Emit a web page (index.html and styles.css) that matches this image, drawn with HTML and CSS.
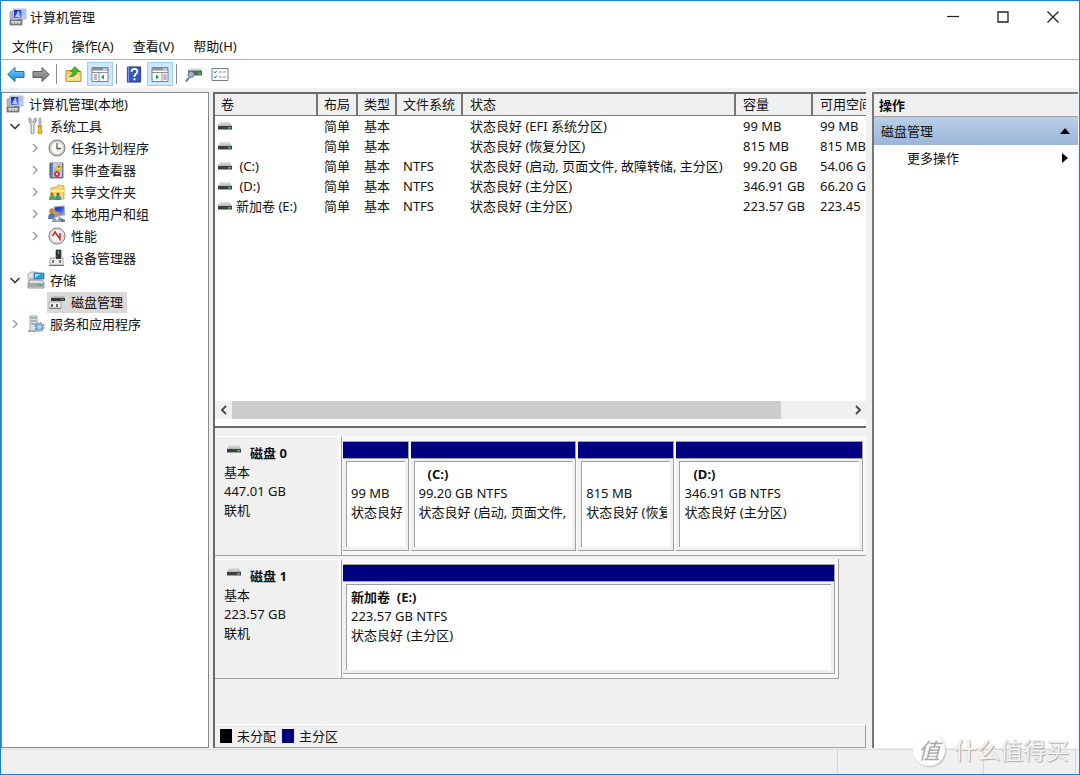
FILE: index.html
```html
<!DOCTYPE html>
<html lang="zh-CN">
<head>
<meta charset="utf-8">
<title>计算机管理</title>
<link rel="stylesheet" href="styles.css">
</head>
<body>
<svg class="defs" aria-hidden="true">
  <defs>
    <linearGradient id="blueArrow" x1="0" y1="0" x2="0" y2="1"><stop offset="0" stop-color="#7fd6fb"/><stop offset="1" stop-color="#0f86cf"/></linearGradient>
    <linearGradient id="greyArrow" x1="0" y1="0" x2="0" y2="1"><stop offset="0" stop-color="#b4b4b4"/><stop offset="1" stop-color="#6d6d6d"/></linearGradient>
    <linearGradient id="driveTop" x1="0" y1="0" x2="0" y2="1"><stop offset="0" stop-color="#e4e4e6"/><stop offset="1" stop-color="#b4b4b8"/></linearGradient>
    <linearGradient id="screen" x1="0" y1="0" x2="1" y2="1"><stop offset="0" stop-color="#1228b8"/><stop offset=".5" stop-color="#3158e0"/><stop offset="1" stop-color="#b5c9f5"/></linearGradient>
  </defs>
  <symbol id="computer" viewBox="0 0 18 18">
    <path d="M1 4l3-1v8H1z" fill="#b9bcc2" stroke="#85888f" stroke-width=".6"/>
    <path d="M4 1h13v10H4z" fill="#d3d8e4" stroke="#9aa0ad" stroke-width=".7"/>
    <path d="M5 2h11v8H5z" fill="url(#screen)"/>
    <path d="M12 2h4v8h-3z" fill="#c6d3f2" opacity=".8"/>
    <path d="M9 3l1 0 1 6H6z" fill="#eef3ff" opacity=".7"/>
    <path d="M8 11h5l1 2H7z" fill="#8c9098"/>
    <path d="M1 12h12v5H1z" fill="#8b8f95" stroke="#565a60" stroke-width=".7"/>
    <path d="M2 14h10M4 13v3M7 13v3M10 13v3" stroke="#eceef0" stroke-width=".9"/>
  </symbol>
  <symbol id="tools" viewBox="0 0 18 18">
    <path d="M2 1v4l2 2v9q1 2 3 0V7l2-2V1L7 2v3H4V2z" fill="#eceef0" stroke="#777b80" stroke-width=".9"/>
    <path d="M12 1h2v8h-2z" fill="#c7c9cc" stroke="#85878b" stroke-width=".6"/>
    <path d="M11 9h4l-1 3 1 2v2q-2 2-4 0v-2l1-2z" fill="#f8b913" stroke="#bd7c08" stroke-width=".7"/>
  </symbol>
  <symbol id="clock" viewBox="0 0 18 18">
    <circle cx="9" cy="9" r="8" fill="#d8d8d8" stroke="#777" stroke-width="1"/>
    <circle cx="9" cy="9" r="6.2" fill="#fffdf2" stroke="#a7a7a7" stroke-width=".6"/>
    <path d="M9 9h4a4 4 0 0 1-4 4z" fill="#f2dfa2"/>
    <path d="M9 4v5.500h4" fill="none" stroke="#4e5d75" stroke-width="1.300"/>
  </symbol>
  <symbol id="events" viewBox="0 0 18 18">
    <path d="M2 2h13v15H2z" fill="#6d89b8" stroke="#45597c" stroke-width=".8"/>
    <path d="M5 2h9v14H5z" fill="#b9cbe8"/>
    <path d="M1 4h3M1 7h3M1 10h3M1 13h3" stroke="#54627a" stroke-width="1"/>
    <path d="M11 3l4 6H7z" fill="#ffd93b" stroke="#b48a08" stroke-width=".6"/>
    <path d="M11 5v2" stroke="#333" stroke-width="1"/>
    <circle cx="9" cy="13" r="3" fill="#e23228"/><path d="M8 12l2 2m0-2l-2 2" stroke="#fff" stroke-width=".9"/>
  </symbol>
  <symbol id="shared" viewBox="0 0 18 18">
    <path d="M3 5l6-1 1-2 6 1v13H3z" fill="#f7d56d" stroke="#c59b30" stroke-width=".8"/>
    <path d="M3 7h13v2H3z" fill="#fdeaa6"/>
    <circle cx="4" cy="11" r="1.600" fill="#a56a3c"/><path d="M1 17q0-5 3-5t4 5z" fill="#5aa65a"/>
    <circle cx="10" cy="11" r="1.600" fill="#8d5730"/><path d="M7 17q0-5 3-5t3 5z" fill="#3c8f9b"/>
  </symbol>
  <symbol id="users" viewBox="0 0 18 18">
    <path d="M6 2l10-1 1 9-9 1z" fill="url(#screen)" stroke="#a3abc0" stroke-width="1"/>
    <circle cx="4" cy="6" r="2.800" fill="#b98a52"/><path d="M0 14q0-6 4-6t5 6z" fill="#5279ad"/>
    <circle cx="9" cy="9" r="2.800" fill="#c4935f"/><path d="M4 17q0-6 5-6t6 6z" fill="#8f9fb0"/>
    <path d="M7 12l2 4 2-4z" fill="#fff"/>
    <path d="M13 13l4 2v2h-4z" fill="#6e757f"/>
  </symbol>
  <symbol id="perf" viewBox="0 0 18 18">
    <circle cx="9" cy="9" r="8" fill="#f6f6f6" stroke="#777" stroke-width="1"/>
    <circle cx="9" cy="9" r="6.300" fill="#fff" stroke="#b0b0b0" stroke-width=".7"/>
    <path d="M4.500 9L7 5l5 7V6" fill="none" stroke="#d8231b" stroke-width="1.600"/>
  </symbol>
  <symbol id="device" viewBox="0 0 18 18">
    <path d="M8 1h5v9H8z" fill="#353a38" stroke="#202321" stroke-width=".6"/>
    <path d="M10 2h1v3h-1z" fill="#5fae78"/>
    <path d="M2 9h13v7H2z" fill="#eeeeee" stroke="#8e8e8e" stroke-width=".8"/>
    <path d="M8 6h5v4H8z" fill="#373b39"/><path d="M5 11v3M12 11v3" stroke="#333" stroke-width="1.300"/>
    <path d="M1 16h15v1H1z" fill="#6e6e6e"/>
  </symbol>
  <symbol id="storage" viewBox="0 0 18 18">
    <path d="M1 3l3-2h6l2 2v5H1z" fill="#dfe2e5" stroke="#8d9298" stroke-width=".7"/>
    <path d="M7 2h10v6H7z" fill="#2e9fd5" stroke="#1f6d98" stroke-width=".7"/><path d="M8 3h5L8 7z" fill="#a4e0fa"/>
    <path d="M1 8l3-2v5H1z" fill="#bfc3c7"/>
    <path d="M1 12l2-3h12l2 3v5H1z" fill="#e2e4e7" stroke="#787d82" stroke-width=".8"/>
    <path d="M1 12h16v4H1z" fill="#a3a7ac"/><path d="M12 13h3v2h-3z" fill="#3fc43f"/>
  </symbol>
  <symbol id="diskmgmt" viewBox="0 0 18 18">
    <path d="M5 3h11l1 2H3z" fill="#b6baba"/><path d="M3 5h14v3H3z" fill="#343937"/><path d="M13 6h3v1h-3z" fill="#46ad53"/>
    <path d="M1 9h12v6H1z" fill="#f0f0f0" stroke="#999" stroke-width=".8"/>
    <path d="M4 11v3M9 11v3" stroke="#2b2b2b" stroke-width="1.400"/><path d="M1 15h12v1H1z" fill="#808080"/>
  </symbol>
  <symbol id="services" viewBox="0 0 18 18">
    <path d="M3 1h7v15H3z" fill="#d9e3e9" stroke="#8499a6" stroke-width=".8"/>
    <path d="M4 3h5M4 6h5M4 9h5" stroke="#64808f" stroke-width="1.200"/>
    <path d="M1 15h8v2H1z" fill="#9fb0ba"/>
    <circle cx="12.500" cy="12" r="3" fill="#b7d3e9" stroke="#6c9dc2" stroke-width="1.500"/>
    <circle cx="12.500" cy="12" r="4.500" fill="none" stroke="#6c9dc2" stroke-width="1.200" stroke-dasharray="2 1.500"/>
  </symbol>
  <symbol id="drive" viewBox="0 0 14 8">
    <path d="M2 0h10l2 4H0z" fill="url(#driveTop)"/><path d="M0 4h14v3H0z" fill="#3c3e40"/><path d="M0 7h14v1H0z" fill="#9da0a2"/><path d="M10 5h3v1.500h-3z" fill="#39cf45"/>
  </symbol>
  <symbol id="open" viewBox="0 0 12 12"><path d="M1.500 4L6 8.500 10.500 4" fill="none" stroke="#404040" stroke-width="1.700"/></symbol>
  <symbol id="closed" viewBox="0 0 12 12"><path d="M4 2l4 4-4 4" fill="none" stroke="#a0a0a0" stroke-width="1.500"/></symbol>
</svg>

<div class="window">
  <header class="titlebar">
    <svg class="ico"><use href="#computer"/></svg>
    <h1 class="title">计算机管理</h1>
    <div class="captions">
      <button class="caption" aria-label="最小化"><svg class="glyph" viewBox="0 0 12 12"><path d="M0 5.500h12" stroke="#222" stroke-width="1.200"/></svg></button>
      <button class="caption" aria-label="最大化"><svg class="glyph" viewBox="0 0 12 12"><path d="M1 1h10v10H1z" fill="none" stroke="#222" stroke-width="1.300"/></svg></button>
      <button class="caption" aria-label="关闭"><svg class="glyph" viewBox="0 0 12 12"><path d="M.5.500l11 11m0-11l-11 11" stroke="#222" stroke-width="1.300"/></svg></button>
    </div>
  </header>

  <nav class="menubar">
    <button class="menu">文件(F)</button>
    <button class="menu">操作(A)</button>
    <button class="menu">查看(V)</button>
    <button class="menu">帮助(H)</button>
  </nav>

  <div class="toolbar">
    <button class="tool" aria-label="后退"><svg class="tico" viewBox="0 0 18 16"><path d="M.7 8L8 1v4h9v6H8v4z" fill="url(#blueArrow)" stroke="#1873ae"/></svg></button>
    <button class="tool" aria-label="前进"><svg class="tico" viewBox="0 0 18 16"><path d="M17.300 8L10 1v4H1v6h9v4z" fill="url(#greyArrow)" stroke="#5e5e5e"/></svg></button>
    <span class="sep"></span>
    <button class="tool wide" aria-label="上一级"><svg class="tico" viewBox="0 0 18 16"><path d="M1 4h5l1 1h9v10H1z" fill="#f0cb6a" stroke="#b89443"/><path d="M2 8h13v6H2z" fill="#fbe094"/><path d="M4 10q4-1 4-5H5l5-5 5 5h-3q-1 6-8 5z" fill="#43b92b" stroke="#298517" stroke-width=".6"/></svg></button>
    <button class="tool wide on" aria-label="显示/隐藏控制台树" aria-pressed="true"><svg class="tico" viewBox="0 0 18 16"><path d="M1 1h16v14H1z" fill="#fafafa" stroke="#7b8087"/><path d="M1 1h16v3H1z" fill="#8b9097"/><path d="M12 2.500h4" stroke="#fff"/><path d="M1 6h16M8 6v9" stroke="#8b9097"/><path d="M3 8.500h3M3 10.500h3M3 12.500h3" stroke="#6b7179"/><path d="M13 8v5l-3-2.500z" fill="#27a32a"/></svg></button>
    <span class="sep"></span>
    <button class="tool wide" aria-label="帮助"><svg class="tico" viewBox="0 0 18 18"><path d="M2 1h14v16H2z" fill="#3358c4" stroke="#23348b"/><path d="M3 1v16" stroke="#92a9ea"/><path d="M6.500 6q0-3 3-3t3 3q0 1.500-2 2.800-1 .8-1 2.700M9.500 13v2" fill="none" stroke="#fff" stroke-width="2"/></svg></button>
    <button class="tool wide on" aria-label="显示/隐藏操作窗格" aria-pressed="true"><svg class="tico" viewBox="0 0 18 16"><path d="M1 1h16v14H1z" fill="#fafafa" stroke="#7b8087"/><path d="M1 1h16v3H1z" fill="#8b9097"/><path d="M12 2.500h4" stroke="#fff"/><path d="M1 6h16M11 6v9" stroke="#8b9097"/><path d="M12.500 8.500h3M12.500 10.500h3M12.500 12.500h3" stroke="#6b7179"/><path d="M5 8v5l3-2.500z" fill="#27a32a"/></svg></button>
    <span class="sep"></span>
    <button class="tool wide" aria-label="重新扫描磁盘"><svg class="tico" viewBox="0 0 18 16"><path d="M4 2h12l1 2H3z" fill="#d2d4d6"/><path d="M3 4h14v5H3z" fill="#5b6064"/><path d="M13 6h3v2h-3z" fill="#3cc44a"/><circle cx="6" cy="8" r="3" fill="#9db8cb" stroke="#647887"/><path d="M4 11l-3 4" stroke="#6b7379" stroke-width="2"/></svg></button>
    <button class="tool wide" aria-label="属性"><svg class="tico" viewBox="0 0 18 16"><path d="M1 2h16v12H1z" fill="#fdfdfd" stroke="#777d84"/><path d="M3 5l1 1.500L6 4M3 10l1 1.500L6 9" fill="none" stroke="#2d83cc"/><path d="M8 5.500h3M12 5.500h3M8 10.500h3M12 10.500h3" stroke="#8a9097"/></svg></button>
  </div>

  <main class="panes">
    <nav class="tree">
      <ul class="nodes">
        <li class="node root"><svg class="ico"><use href="#computer"/></svg>计算机管理(本地)</li>
        <li class="node lv1"><button class="twist" aria-label="折叠"><svg class="chev"><use href="#open"/></svg></button><svg class="ico"><use href="#tools"/></svg>系统工具</li>
        <li class="node lv2"><button class="twist" aria-label="展开"><svg class="chev"><use href="#closed"/></svg></button><svg class="ico"><use href="#clock"/></svg>任务计划程序</li>
        <li class="node lv2"><button class="twist" aria-label="展开"><svg class="chev"><use href="#closed"/></svg></button><svg class="ico"><use href="#events"/></svg>事件查看器</li>
        <li class="node lv2"><button class="twist" aria-label="展开"><svg class="chev"><use href="#closed"/></svg></button><svg class="ico"><use href="#shared"/></svg>共享文件夹</li>
        <li class="node lv2"><button class="twist" aria-label="展开"><svg class="chev"><use href="#closed"/></svg></button><svg class="ico"><use href="#users"/></svg>本地用户和组</li>
        <li class="node lv2"><button class="twist" aria-label="展开"><svg class="chev"><use href="#closed"/></svg></button><svg class="ico"><use href="#perf"/></svg>性能</li>
        <li class="node lv2 leaf"><svg class="ico"><use href="#device"/></svg>设备管理器</li>
        <li class="node lv1"><button class="twist" aria-label="折叠"><svg class="chev"><use href="#open"/></svg></button><svg class="ico"><use href="#storage"/></svg>存储</li>
        <li class="node lv2 leaf"><span class="picked"><svg class="ico"><use href="#diskmgmt"/></svg>磁盘管理</span></li>
        <li class="node lv1"><button class="twist" aria-label="展开"><svg class="chev"><use href="#closed"/></svg></button><svg class="ico"><use href="#services"/></svg>服务和应用程序</li>
      </ul>
    </nav>

    <section class="center">
      <div class="volumes">
        <div class="list">
          <table class="grid">
            <colgroup><col class="c-name"><col class="c-layout"><col class="c-type"><col class="c-fs"><col class="c-state"><col class="c-size"><col class="c-free"></colgroup>
            <thead><tr><th>卷</th><th>布局</th><th>类型</th><th>文件系统</th><th>状态</th><th>容量</th><th>可用空间</th></tr></thead>
            <tbody>
              <tr><td><span class="vol"><svg class="drv"><use href="#drive"/></svg></span></td><td>简单</td><td>基本</td><td></td><td>状态良好 (EFI 系统分区)</td><td>99 MB</td><td>99 MB</td></tr>
              <tr><td><span class="vol"><svg class="drv"><use href="#drive"/></svg></span></td><td>简单</td><td>基本</td><td></td><td>状态良好 (恢复分区)</td><td>815 MB</td><td>815 MB</td></tr>
              <tr><td><span class="vol"><svg class="drv"><use href="#drive"/></svg>&nbsp;(C:)</span></td><td>简单</td><td>基本</td><td>NTFS</td><td>状态良好 (启动, 页面文件, 故障转储, 主分区)</td><td>99.20 GB</td><td>54.06 GB</td></tr>
              <tr><td><span class="vol"><svg class="drv"><use href="#drive"/></svg>&nbsp;(D:)</span></td><td>简单</td><td>基本</td><td>NTFS</td><td>状态良好 (主分区)</td><td>346.91 GB</td><td>66.20 GB</td></tr>
              <tr><td><span class="vol"><svg class="drv"><use href="#drive"/></svg>新加卷 (E:)</span></td><td>简单</td><td>基本</td><td>NTFS</td><td>状态良好 (主分区)</td><td>223.57 GB</td><td>223.45</td></tr>
            </tbody>
          </table>
        </div>
        <div class="hscroll">
          <button class="arrow" aria-label="向左滚动"><svg class="sarrow" viewBox="0 0 10 10"><path d="M7 1L3 5l4 4" fill="none" stroke="#444" stroke-width="1.800"/></svg></button>
          <div class="track"><div class="thumb"></div></div>
          <button class="arrow" aria-label="向右滚动"><svg class="sarrow" viewBox="0 0 10 10"><path d="M3 1l4 4-4 4" fill="none" stroke="#444" stroke-width="1.800"/></svg></button>
        </div>
      </div>

      <div class="disks">
        <article class="disk">
          <div class="info">
            <h2 class="name"><svg class="drv"><use href="#drive"/></svg>磁盘 0</h2>
            <p>基本</p><p>447.01 GB</p><p>联机</p>
          </div>
          <div class="strip">
            <div class="part p-efi"><div class="bar"></div><div class="box"><b></b><p>99 MB</p><p>状态良好</p></div></div>
            <div class="part p-c"><div class="bar"></div><div class="box"><b class="drive">(C:)</b><p>99.20 GB NTFS</p><p>状态良好 (启动, 页面文件,</p></div></div>
            <div class="part p-rec"><div class="bar"></div><div class="box"><b></b><p>815 MB</p><p>状态良好 (恢复</p></div></div>
            <div class="part p-d"><div class="bar"></div><div class="box"><b class="drive">(D:)</b><p>346.91 GB NTFS</p><p>状态良好 (主分区)</p></div></div>
          </div>
        </article>
        <article class="disk">
          <div class="info">
            <h2 class="name"><svg class="drv"><use href="#drive"/></svg>磁盘 1</h2>
            <p>基本</p><p>223.57 GB</p><p>联机</p>
          </div>
          <div class="strip short">
            <div class="part"><div class="bar"></div><div class="box"><b>新加卷&nbsp; (E:)</b><p>223.57 GB NTFS</p><p>状态良好 (主分区)</p></div></div>
          </div>
        </article>
        <div class="legend">
          <span class="key"><i class="swatch none"></i>未分配</span>
          <span class="key"><i class="swatch primary"></i>主分区</span>
        </div>
      </div>
    </section>

    <aside class="actions">
      <h2 class="heading">操作</h2>
      <button class="group">磁盘管理<svg class="tri" viewBox="0 0 10 10"><path d="M0 8l5-6 5 6z"/></svg></button>
      <button class="more">更多操作<svg class="tri" viewBox="0 0 10 10"><path d="M2 0l6 5-6 5z"/></svg></button>
    </aside>
  </main>

  <footer class="status"><span class="cell main"></span><span class="cell mid"></span><span class="cell end"></span></footer>
  <div class="mark"><span class="seal">值</span>什么值得买</div>
</div>
</body>
</html>
```

FILE: styles.css
```css
* { box-sizing: border-box; }

body {
  margin: 0;
  font: 13px/19px "Noto Sans", "Noto Sans CJK SC", sans-serif;
  color: #111;
}

h1, h2, p, ul { margin: 0; padding: 0; font-size: 13px; font-weight: normal; }

button {
  border: 0;
  padding: 0;
  background: none;
  font: inherit;
  color: inherit;
}

svg { display: block; flex: none; }
.defs { position: absolute; width: 0; height: 0; }

.window {
  position: relative;
  display: flex;
  flex-direction: column;
  min-height: 100vh;
  border: 1px solid #1883d7;
  background: #f0f0f0;
}

/* Caption and menu */
.titlebar {
  display: flex;
  align-items: center;
  height: 32px;
  padding-left: 8px;
  background: #fff;
}
.title { flex: 1; padding-left: 3px; }
.ico { width: 18px; height: 18px; }
.captions { display: flex; padding-right: 1px; }
.caption {
  display: grid;
  place-items: center;
  width: 50px;
  height: 30px;
}
.glyph { width: 12px; height: 12px; }

.menubar {
  display: flex;
  gap: 2px;
  height: 27px;
  padding-left: 2px;
  border-bottom: 1px solid #b4b4b4;
  background: #fff;
}
.menu { padding: 0 8px 0 9px; }

.toolbar {
  display: flex;
  align-items: center;
  height: 28px;
  padding-left: 2px;
  background: #fff;
}
.tool { display: grid; place-items: center; width: 25px; height: 24px; }
.tool.wide { width: 26px; }
.tool.on { border: 1px solid #99d1ff; background: #cce8ff; }
.tico { width: 18px; height: 17px; }
.sep { width: 1px; height: 20px; margin: 0 4px 0 3px; background: #8a8a8a; }

/* Panes */
.panes {
  flex: 1;
  display: flex;
  gap: 5px;
  min-height: 0;
  margin-top: 4px;
  padding-right: 1px;
}

.tree { flex: none; width: 208px; border: 1px solid #828790; background: #fff; }
.nodes { list-style: none; }
.node { display: flex; align-items: center; gap: 5px; height: 22px; }
.root { padding-left: 4px; }
.lv1 { padding-left: 7px; }
.lv2 { padding-left: 27px; }
.lv2.leaf { padding-left: 45px; }
.lv2 .ico { margin-left: 1px; }
.twist { width: 12px; height: 12px; }
.lv1 .twist + .ico { margin-left: 1px; }
.lv2 .twist + .ico { margin-left: 2px; }
.chev { width: 12px; height: 12px; }
.picked {
  display: flex;
  align-items: center;
  gap: 5px;
  height: 21px;
  padding-right: 4px;
  background: #d9d9d9;
}

.center { flex: 1; display: flex; flex-direction: column; min-width: 0; margin: 0 1px 0 -1px; border-left: 2px solid #696969; }

.volumes {
  flex: 338 0 0;
  display: flex;
  flex-direction: column;
  border-top: 2px solid #696969;
  border-bottom: 2px solid #696969;
  background: #fff;
}
.list { flex: 1; overflow: hidden; }
.grid { width: 689px; table-layout: fixed; border-collapse: separate; border-spacing: 0; }
.c-name { width: 103px; }
.c-layout { width: 40px; }
.c-type { width: 39px; }
.c-fs { width: 66px; }
.c-state { width: 273px; }
.c-size { width: 77px; }
.grid th {
  height: 22px;
  padding: 0 0 0 6px;
  border-right: 2px solid #777;
  border-bottom: 1px solid #777;
  background: #f0f0f0;
  font-weight: normal;
  text-align: left;
  white-space: nowrap;
}
.grid td { height: 20px; padding: 0 0 0 6px; white-space: nowrap; line-height: 18px; }
.grid td:first-child { padding-left: 3px; }
.grid th:nth-child(n+5), .grid td:nth-child(n+5) { padding-left: 7px; }
.vol { display: flex; align-items: center; gap: 4px; }
.drv { width: 14px; height: 8px; }

.hscroll { display: flex; height: 18px; margin-bottom: 7px; background: #f0f0f0; }
.arrow { display: grid; place-items: center; width: 17px; }
.sarrow { width: 10px; height: 10px; }
.track { flex: 1; }
.thumb { width: 89%; height: 100%; background: #cdcdcd; }

.disks { flex: 317 0 0; display: flex; flex-direction: column; padding-top: 8px; border-bottom: 1px solid #a0a0a0; }
.disk { display: flex; height: 120px; margin-bottom: 3px; }
.disk:first-child { border-bottom: 1px solid #a0a0a0; }
.info {
  flex: none;
  width: 127px;
  padding: 7px 0 0 9px;
  border-top: 1px solid #fff;
  border-right: 1px solid #a0a0a0;
  box-shadow: inset -3px 0 #f8f8f8;
}
.disk:last-of-type .info { border-bottom: 1px solid #a0a0a0; }
.name { display: flex; gap: 9px; padding: 0 0 0 3px; font-weight: bold; }
.name .drv { margin-top: 1px; }
.strip {
  flex: 1;
  display: flex;
  gap: 2px;
  min-width: 0;
  padding: 5px 3px 4px 1px;
  background: #f8f8f8;
}
.strip.short { flex: none; width: 497px; max-width: 95%; border-right: 1px solid #a0a0a0; border-bottom: 1px solid #a0a0a0; }
.part {
  flex: 1 1 0;
  display: flex;
  flex-direction: column;
  min-width: 0;
  border: 1px solid #a0a0a0;
  border-left: 0;
  background: #f0f0f0;
}
.p-efi { flex-grow: 65; }
.p-c { flex-grow: 166; }
.p-rec { flex-grow: 96; }
.p-d { flex-grow: 187; }
.bar { height: 17px; background: #000080; border-bottom: 1px solid #a0a0a0; }
.box {
  flex: 1;
  overflow: hidden;
  margin: 2px 3px 3px;
  padding: 3px 3px 0 4px;
  border-left: 1px solid #a0a0a0;
  border-top: 1px solid #a0a0a0;
  background: #fff;
  white-space: nowrap;
}
.box b { display: block; height: 19px; }
.box p { overflow: hidden; }
.drive { padding-left: 9px; }

.legend {
  display: flex;
  align-items: center;
  gap: 6px;
  height: 23px;
  margin-top: auto;
  padding-left: 5px;
  border-top: 1px solid #fff;
  border-right: 1px solid #a0a0a0;
}
.key { display: flex; align-items: center; gap: 5px; }
.swatch { width: 12px; height: 14px; }
.none { background: #000; }
.primary { background: #000080; }

.actions {
  flex: none;
  width: 206px;
  border-left: 2px solid #777;
  border-top: 2px solid #777;
  background: #fff;
}
.heading { height: 23px; padding-left: 5px; border-bottom: 1px solid #a0a0a0; background: #f0f0f0; font-weight: bold; line-height: 22px; }
.group, .more { display: flex; align-items: center; justify-content: space-between; width: 100%; height: 28px; padding: 0 8px 0 7px; }
.group { background: linear-gradient(#b9cfe9, #9bb6d7); }
.more { height: 26px; padding-left: 33px; }
.tri { width: 10px; height: 10px; fill: #000; }

.status { display: flex; height: 25px; margin-top: 1px; padding-right: 3px; border-top: 1px solid #dcdcdc; }
.cell { border-right: 1px solid #d5d5d5; }
.main { flex: 1; }
.mid { width: 146px; }
.end { width: 92px; }

/* Stamp laid over the lower right corner */
.mark {
  position: absolute;
  right: 10px;
  bottom: 8px;
  display: flex;
  align-items: center;
  gap: 9px;
  font-size: 23px;
  line-height: 32px;
  color: #f4f4f4;
  text-shadow: 1px 1px 1px #aaa, 0 0 1px #bbb;
}
.seal {
  width: 32px;
  height: 32px;
  border-radius: 50%;
  background: #fff;
  box-shadow: 1px 1px 2px #bbb;
  color: #aaa;
  text-align: center;
  text-shadow: none;
  font-size: 22px;
  font-style: italic;
}
```
